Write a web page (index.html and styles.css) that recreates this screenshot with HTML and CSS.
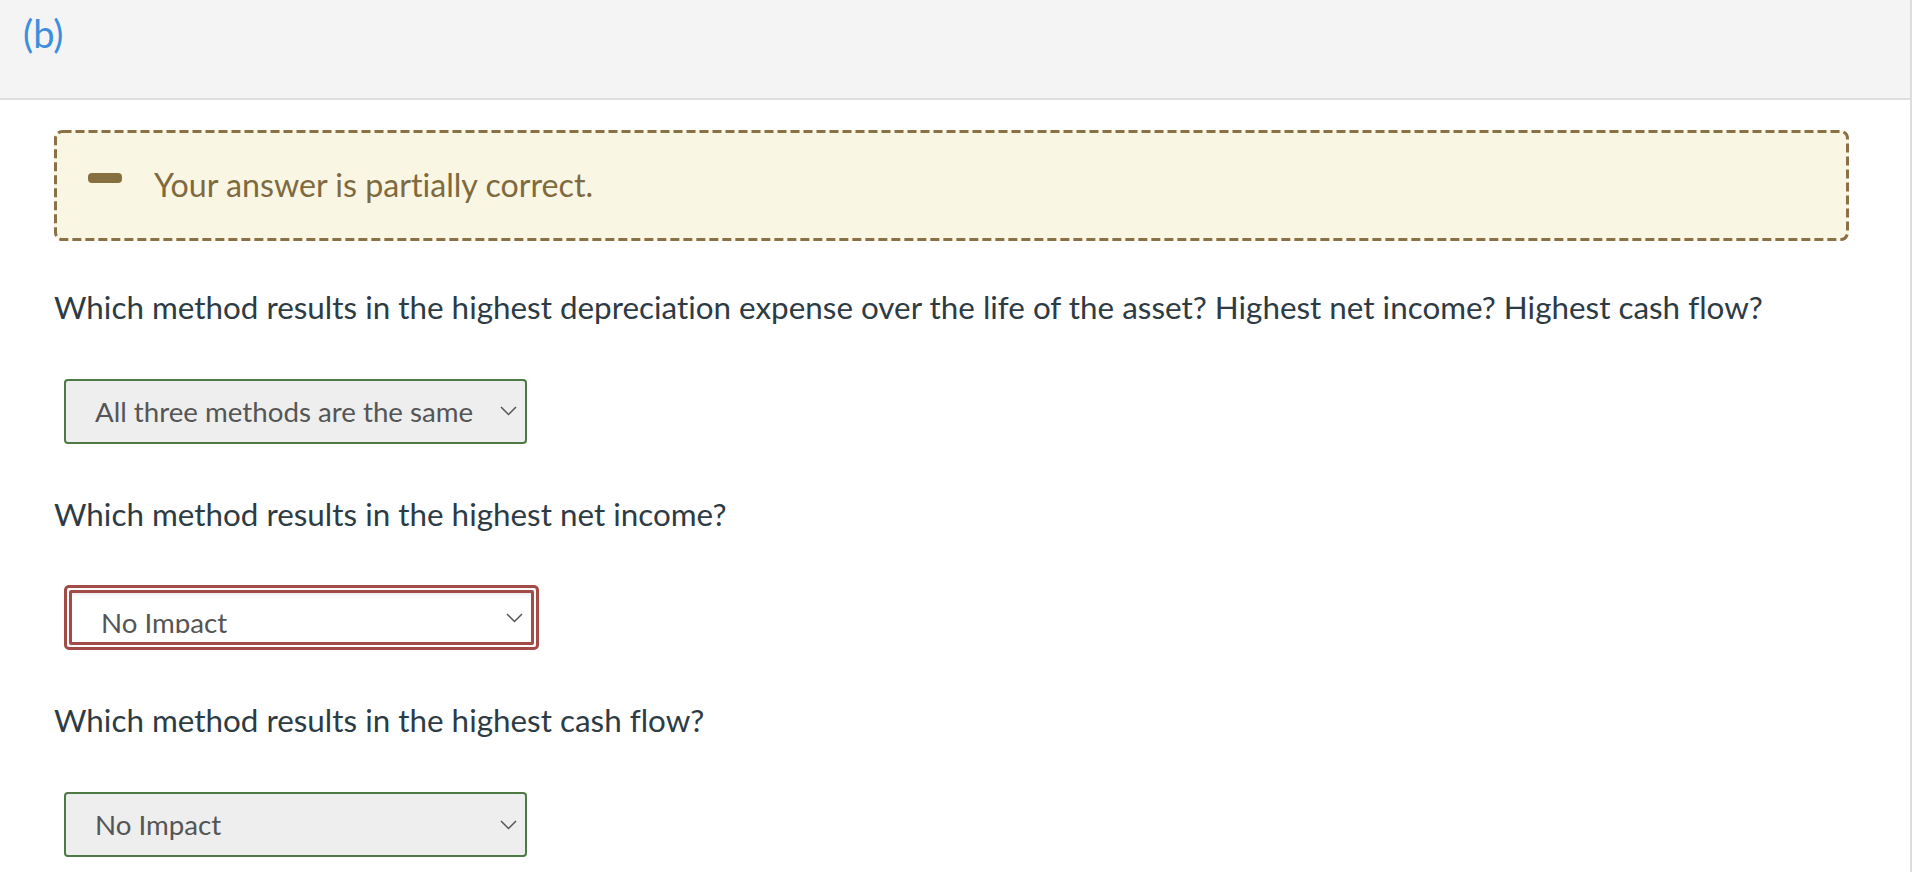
FILE: index.html
```html
<!DOCTYPE html>
<html lang="en">
<head>
<meta charset="utf-8">
<title>Part (b)</title>
<link rel="stylesheet" href="styles.css">
</head>
<body>
<div class="panel">
  <header class="part-header">
    <span class="part-label">(b)</span>
  </header>
  <main class="part-body">
    <div class="feedback">
      <svg class="feedback-border" aria-hidden="true"><rect class="feedback-rect"/></svg>
      <span class="feedback-icon"></span>
      <span class="feedback-text">Your answer is partially correct.</span>
    </div>

    <p class="question q-first">Which method results in the highest depreciation expense over the life of the asset? Highest net income? Highest cash flow?</p>
    <div class="select select-correct">
      <span class="select-value">All three methods are the same</span>
      <svg class="chevron" width="17" height="10" viewBox="0 0 17 10"><polyline points="1,1 8.5,8.5 16,1" fill="none" stroke="#555" stroke-width="1.5"/></svg>
    </div>

    <p class="question">Which method results in the highest net income?</p>
    <div class="select-wrong-outer">
      <div class="select-wrong-inner">
        <span class="select-value clipped">No Impact</span>
        <svg class="chevron" width="17" height="10" viewBox="0 0 17 10"><polyline points="1,1 8.5,8.5 16,1" fill="none" stroke="#555" stroke-width="1.5"/></svg>
      </div>
    </div>

    <p class="question">Which method results in the highest cash flow?</p>
    <div class="select select-correct">
      <span class="select-value">No Impact</span>
      <svg class="chevron" width="17" height="10" viewBox="0 0 17 10"><polyline points="1,1 8.5,8.5 16,1" fill="none" stroke="#555" stroke-width="1.5"/></svg>
    </div>
  </main>
</div>
</body>
</html>
```

FILE: styles.css
```css
* { box-sizing: border-box; }

html, body {
  margin: 0;
  padding: 0;
  background: #ffffff;
  font-family: Lato, "Open Sans", "Liberation Sans", sans-serif;
  font-variant-ligatures: none;
}

.panel {
  min-height: 872px;
  border-right: 2px solid #dcdcdc;
}

.part-header {
  height: 100px;
  background: #f4f4f4;
  border-bottom: 2px solid #dedede;
  padding: 11px 0 0 23px;
}

.part-label {
  font-size: 38px;
  line-height: 1.2;
  color: #3d8fdc;
}

.part-body {
  padding: 30px 61px 0 54px;
}

.feedback {
  position: relative;
  height: 111px;
  border-radius: 8px;
  background: #faf6e4;
  display: flex;
  align-items: center;
  padding-left: 34px;
}

.feedback-border {
  position: absolute;
  left: 0;
  top: 0;
  width: 100%;
  height: 100%;
  overflow: visible;
  pointer-events: none;
}

.feedback-rect {
  x: 1.5px;
  y: 1.5px;
  width: calc(100% - 3px);
  height: calc(100% - 3px);
  rx: 7px;
  ry: 7px;
  fill: none;
  stroke: #8a7045;
  stroke-width: 3px;
  stroke-dasharray: 9 4;
}

.feedback-icon {
  align-self: flex-start;
  margin-top: 43px;
  width: 34px;
  height: 10px;
  border-radius: 4px;
  background: #86703f;
  flex: none;
}

.feedback-text {
  margin-left: 32px;
  font-size: 32.2px;
  line-height: 1.2;
  color: #7f6a40;
}

.question {
  margin: 52px 0 0 0;
  font-size: 31.4px;
  line-height: 1.2;
  color: #2d3b45;
}

.question.q-first {
  margin-top: 48px;
}

.select {
  margin: 52px 0 0 10px;
  width: 463px;
  height: 65px;
  border: 2px solid #4d7a44;
  border-radius: 4px;
  background: #eeeeee;
  display: flex;
  align-items: center;
  justify-content: space-between;
  padding: 0 8px 0 29px;
}

.select-value {
  font-size: 27.7px;
  line-height: 1.2;
  color: #555555;
  white-space: nowrap;
}

.chevron {
  flex: none;
  display: block;
}

.select-wrong-outer {
  margin: 52px 0 0 10px;
  width: 475px;
  height: 65px;
  border: 3px solid #a34b47;
  border-radius: 5px;
  padding: 2px;
  background: #ffffff;
}

.select-wrong-inner {
  height: 100%;
  border: 3px solid #a34b47;
  border-radius: 2px;
  background: #ffffff;
  box-shadow: inset 0 2px 2px rgba(0, 0, 0, 0.07);
  display: flex;
  align-items: center;
  justify-content: space-between;
  padding: 0 8px 0 29px;
}

.select-value.clipped {
  align-self: flex-start;
  margin-top: 13px;
  height: 27px;
  overflow: hidden;
}
```
